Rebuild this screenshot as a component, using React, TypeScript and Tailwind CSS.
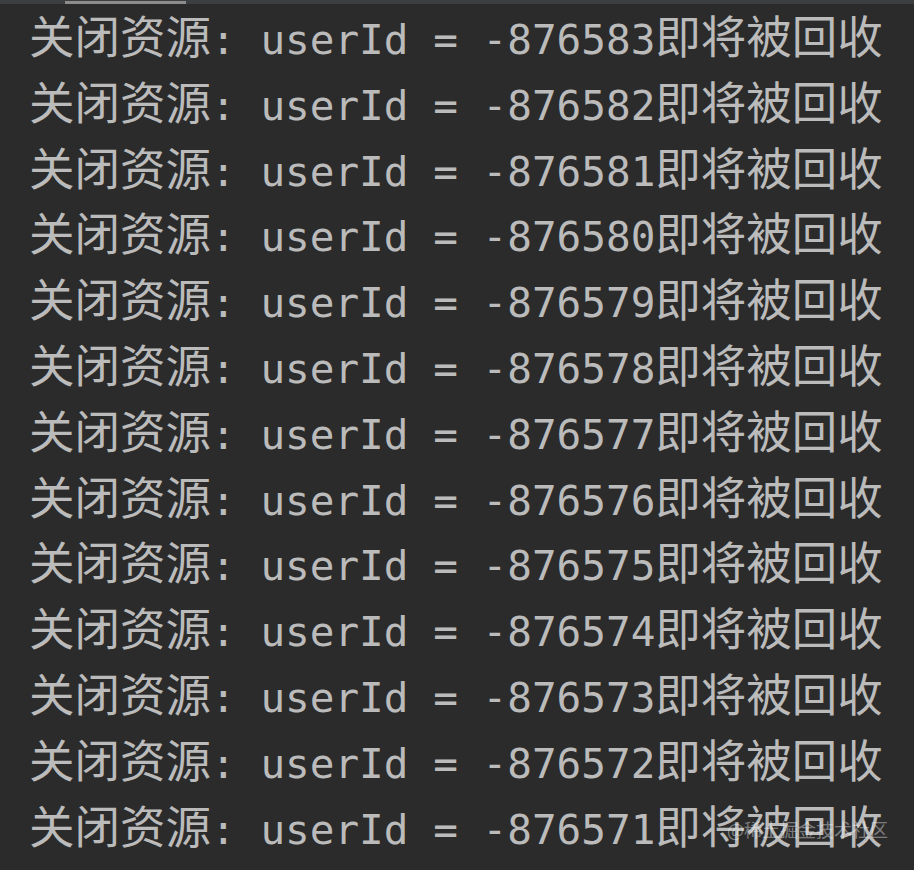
import React from "react";

const ids = [
  876583, 876582, 876581, 876580, 876579, 876578, 876577, 876576, 876575,
  876574, 876573, 876572, 876571,
];

const cjk = { fontFamily: '"Noto Sans CJK SC", "Noto Sans", sans-serif' };

const LogLine = ({ id }: { id: number }) => {
  return (
    <div className="whitespace-pre h-[65.8px] leading-[66px]">
      <span>关闭资源</span>
      <span className="font-['DejaVu_Sans_Mono',monospace] text-[41px]">
        {`: userId = -${id}`}
      </span>
      <span>即将被回收</span>
    </div>
  );
};

const App = () => {
  return (
    <main className="relative w-[914px] h-[870px] overflow-hidden bg-[#2b2b2b]">
      <div className="h-[4px] bg-[#3c3f41] flex">
        <div className="ml-[65px] mt-[1px] w-[121px] h-[3px] bg-[#8c8c8c]" />
      </div>
      <section
        className="-mt-[3px] pl-[29px] text-[45.5px] text-[#bbbbbb]"
        style={cjk}
      >
        {ids.map((id) => (
          <LogLine key={id} id={id} />
        ))}
      </section>
      <div
        className="absolute right-[26px] top-[817px] text-[18px] leading-[24px] text-[#ffffff]/40"
        style={cjk}
      >
        @稀土掘金技术社区
      </div>
    </main>
  );
};

export default App;
